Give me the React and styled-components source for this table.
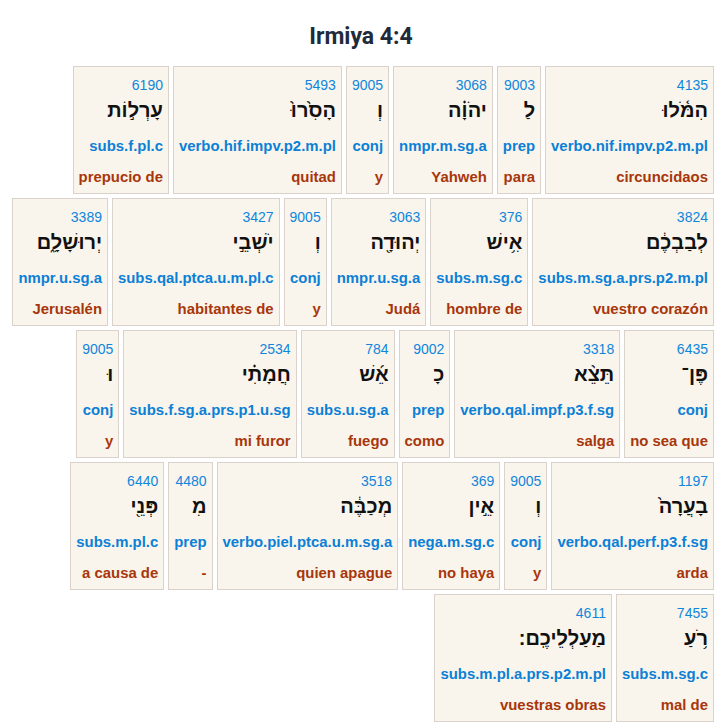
import React from "react";
import styled, { createGlobalStyle } from "styled-components";

const GlobalStyle = createGlobalStyle`
  body {
    margin: 0;
    background: #ffffff;
    font-family: "Liberation Sans", Arial, sans-serif;
  }
`;

const Page = styled.div`
  padding: 0 10px 10px 8px;
`;

const Title = styled.h1`
  margin: 0;
  padding: 24px 0 16px;
  text-align: center;
  font-family: Roboto, "Liberation Sans", sans-serif;
  font-size: 23px;
  font-weight: 700;
  line-height: 26px;
  color: #1f2b3a;
`;

const Verse = styled.div`
  display: flex;
  flex-wrap: wrap;
  direction: rtl;
  gap: 4px;
`;

const Card = styled.div`
  background: #f9f5ec;
  border: 1px solid #dcd2cc;
  padding: 8px 5px 5px;
  height: 128px;
  box-sizing: border-box;
  text-align: right;
`;

const Num = styled.div`
  direction: ltr;
  font-size: 14px;
  line-height: 20px;
  color: #0f86dc;
`;

const Word = styled.div`
  direction: rtl;
  font-size: 20px;
  font-weight: 700;
  line-height: 30px;
  color: #111;
`;

const Morph = styled.div`
  direction: ltr;
  margin-top: 11px;
  font-size: 14.9px;
  font-weight: 700;
  line-height: 20px;
  color: #0b80d6;
  white-space: nowrap;
`;

const Gloss = styled.div`
  direction: ltr;
  margin-top: 11px;
  font-size: 14.9px;
  font-weight: 700;
  line-height: 20px;
  color: #a8360b;
  white-space: nowrap;
`;

const words = [
  ["4135", "הִמֹּ֫לוּ", "verbo.nif.impv.p2.m.pl", "circuncidaos"],
  ["9003", "לַ", "prep", "para"],
  ["3068", "יהֹוָ֗ה", "nmpr.m.sg.a", "Yahweh"],
  ["9005", "וְ", "conj", "y"],
  ["5493", "הָסִ֙רוּ֙", "verbo.hif.impv.p2.m.pl", "quitad"],
  ["6190", "עָרְל֣וֹת", "subs.f.pl.c", "prepucio de"],
  ["3824", "לְבַבְכֶ֔ם", "subs.m.sg.a.prs.p2.m.pl", "vuestro corazón"],
  ["376", "אִ֥ישׁ", "subs.m.sg.c", "hombre de"],
  ["3063", "יְהוּדָ֖ה", "nmpr.u.sg.a", "Judá"],
  ["9005", "וְ", "conj", "y"],
  ["3427", "יֹשְׁבֵ֣י", "subs.qal.ptca.u.m.pl.c", "habitantes de"],
  ["3389", "יְרוּשָׁלִָ֑ם", "nmpr.u.sg.a", "Jerusalén"],
  ["6435", "פֶּן־", "conj", "no sea que"],
  ["3318", "תֵּצֵ֨א", "verbo.qal.impf.p3.f.sg", "salga"],
  ["9002", "כָ", "prep", "como"],
  ["784", "אֵ֜שׁ", "subs.u.sg.a", "fuego"],
  ["2534", "חֲמָתִ֗י", "subs.f.sg.a.prs.p1.u.sg", "mi furor"],
  ["9005", "וּ", "conj", "y"],
  ["1197", "בָעֲרָה֙", "verbo.qal.perf.p3.f.sg", "arda"],
  ["9005", "וְ", "conj", "y"],
  ["369", "אֵ֣ין", "nega.m.sg.c", "no haya"],
  ["3518", "מְכַבֶּ֔ה", "verbo.piel.ptca.u.m.sg.a", "quien apague"],
  ["4480", "מִ", "prep", "-"],
  ["6440", "פְּנֵ֖י", "subs.m.pl.c", "a causa de"],
  ["7455", "רֹ֥עַ", "subs.m.sg.c", "mal de"],
  ["4611", "מַעַלְלֵיכֶֽם:", "subs.m.pl.a.prs.p2.m.pl", "vuestras obras"],
];

const App = () => {
  return (
    <Page>
      <GlobalStyle />
      <Title>Irmiya 4:4</Title>
      <Verse>
        {words.map(([num, heb, morph, gloss], i) => (
          <Card key={i}>
            <Num>{num}</Num>
            <Word lang="he">{heb}</Word>
            <Morph>{morph}</Morph>
            <Gloss>{gloss}</Gloss>
          </Card>
        ))}
      </Verse>
    </Page>
  );
};

export default App;
